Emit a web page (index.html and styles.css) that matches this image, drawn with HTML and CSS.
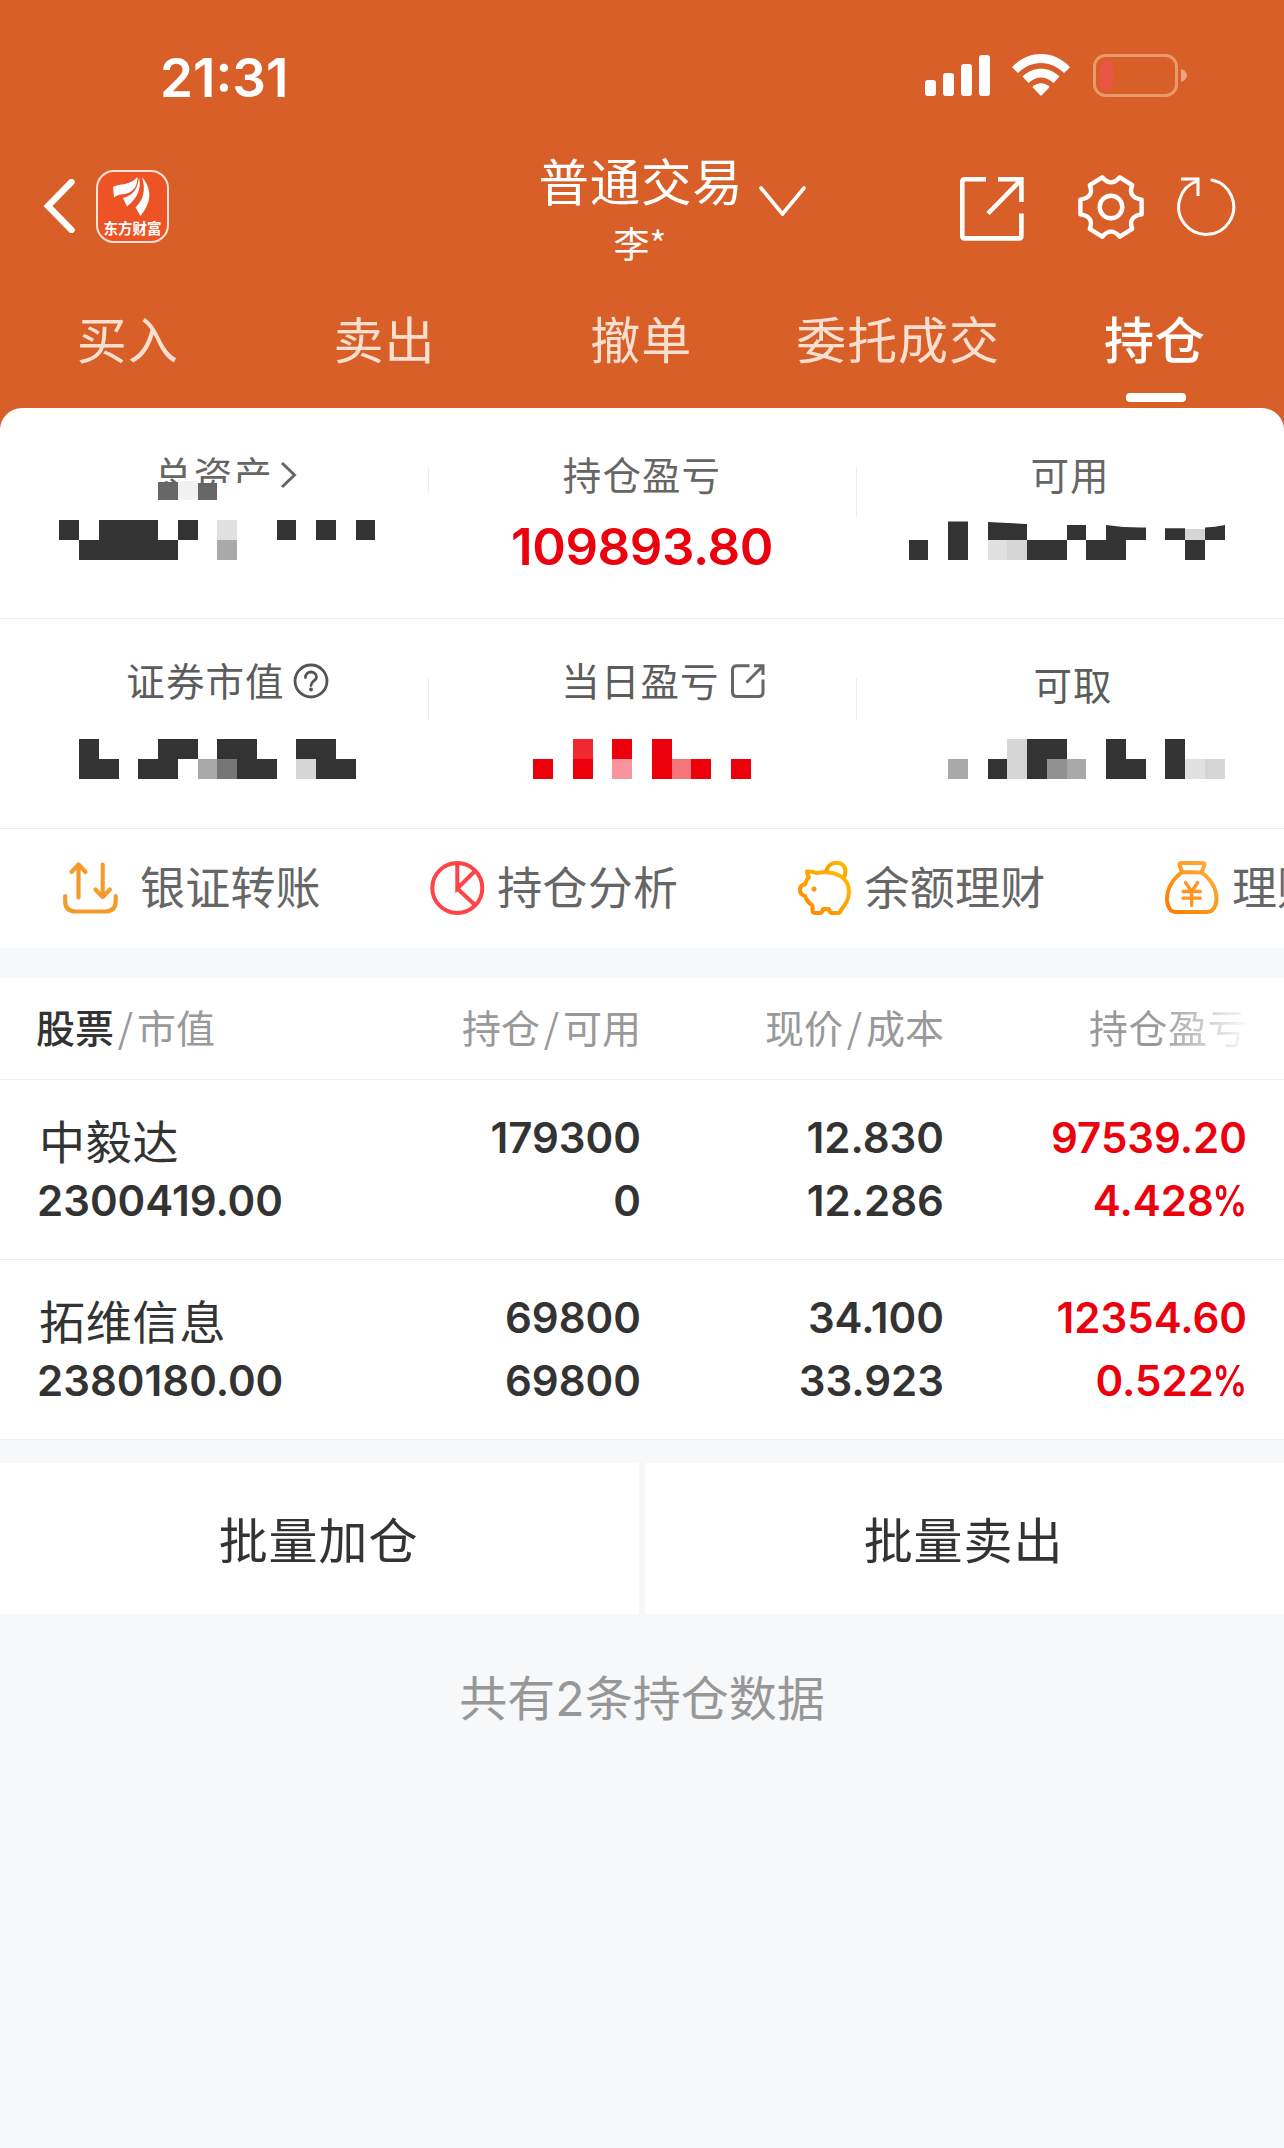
FILE: index.html
```html
<!DOCTYPE html>
<html lang="zh-CN">
<head>
<meta charset="utf-8">
<title>普通交易 - 持仓</title>
<link rel="stylesheet" href="styles.css">
</head>
<body>
<div class="top">
  <div class="status">
    <span class="time">21:31</span>
    <div class="status-icons">
      <svg width="65" height="43" viewBox="0 0 65 43" fill="#fff"><rect x="0" y="26" width="11" height="16" rx="3"/><rect x="18" y="19" width="11" height="23" rx="3"/><rect x="36" y="10" width="11" height="32" rx="3"/><rect x="54" y="1" width="11" height="41" rx="3"/></svg>
      <svg width="58" height="43" viewBox="0 0 58 43" fill="#fff"><path d="M0 13.200C16-4.400 42-4.400 58 13.200L52 19C39 5.500 19 5.500 6 19z"/><path d="M10.500 22.500C21 12 37 12 47.500 22.500L41.500 29C34 21.500 24 21.500 16.500 29z"/><path d="M20.300 33C25.500 28 32.500 28 37.700 33L29 42z"/></svg>
      <svg class="battery" width="95" height="43" viewBox="0 0 95 43"><rect x="1.500" y="1.500" width="82" height="40" rx="11" fill="none" stroke="#e99a6c" stroke-width="3"/><rect x="7" y="7" width="13" height="29" rx="5" fill="#ea5545"/><path d="M88 15c8 3 8 10 0 13z" fill="#eba67f"/></svg>
    </div>
  </div>
  <div class="nav">
    <div class="nav-left">
      <svg width="32" height="54" viewBox="0 0 32 54"><path d="M28.500 3L5 27l23.500 24" fill="none" stroke="#fff" stroke-width="6.400" stroke-linejoin="miter" stroke-linecap="round"/></svg>
      <div class="logo">
        <svg width="69" height="48" viewBox="2 2 69 48" fill="#fff"><path d="M17 17C24 13 34 16 41.500 7c0 8-3 13-9 16-5 2-10 .5-14.500 4.500z"/><path d="M43 7c2.500 11-1 21-12 29.500L27 28c11-3 15-10 16-21z"/><path d="M46 7c11 13 9 26-1.500 39L39.500 37.500c8-8 10.500-17 6.500-30.500z"/></svg>
        <span class="logo-name">东方财富</span>
      </div>
    </div>
    <div class="nav-title">
      <div><div class="title">普通交易</div><div class="user">李*</div></div>
      <svg class="chevron" width="47" height="32" viewBox="0 0 47 32"><path d="M2 2l21.500 26L45 2" fill="none" stroke="#fff" stroke-width="3.600" stroke-linejoin="round" stroke-linecap="round"/></svg>
    </div>
    <div class="nav-right">
      <svg class="share" width="64" height="64" viewBox="0 0 64 64" fill="none" stroke="#fff" stroke-width="4.600"><path d="M26 2.300H5Q2.300 2.300 2.300 5v53.700q0 2.700 2.700 2.700h53.700q2.700 0 2.700-2.700V36.500M38 2.300h23.400V25M61 3L28 36.500"/></svg>
      <svg class="gear" width="68" height="66" viewBox="-34 -33 68 66" fill="none" stroke="#fff" stroke-width="4.400" stroke-linejoin="round"><path d="M30.600 7.400Q16.500 9.500 21.200 21.900L8.800 29.700Q0 19.500-8.800 29.700L-21.200 21.900Q-16.500 9.500-30.600 7.400V-7.400Q-16.500-9.500-21.200-21.900L-8.800-29.700Q0-19.500 8.800-29.700L21.200-21.900Q16.500-9.500 30.600-7.400z"/><circle r="11.300"/></svg>
      <svg width="60" height="60" viewBox="0 0 60 60" fill="none" stroke="#fff" stroke-width="3" stroke-linecap="round"><path d="M36 4A27.500 27.500 0 1 1 21.500 4.800"/><path d="M5 3h17v17" stroke-linecap="butt"/></svg>
    </div>
  </div>
  <div class="tabs">
    <span class="tab">买入</span><span class="tab">卖出</span><span class="tab">撤单</span><span class="tab">委托成交</span><span class="tab active">持仓</span>
  </div>
  <div class="summary">
    <div class="sum-row">
      <div class="cell">
        <div class="label total"><span>总资产</span><svg width="17" height="28" viewBox="0 0 17 28"><path d="M2 2l12.500 12L2 26" fill="none" stroke="#666" stroke-width="3"/></svg></div>
        <svg class="mosaic raised" width="428" height="79" viewBox="0 481 428 79" shape-rendering="crispEdges"><path fill="#fff" d="M140 483h136v5h20v12H140z"/><path fill="#666" d="M158 482h20v18h-20zM198 483h19v17h-19z"/><path fill="#f1f1f1" d="M178 481h20v19h-20z"/><path fill="#333" d="M59 520h20v20H59zM99 520h59v20H99zM178 520h20v20h-20zM277 520h19v20h-19zM316 520h20v20h-20zM356 520h19v20h-19zM79 540h99v20H79z"/><path fill="#e1e1e1" d="M217 520h20v20h-20z"/><path fill="#a9a9a9" d="M217 540h20v20h-20z"/></svg>
      </div>
      <div class="cell divided short"><div class="label">持仓盈亏</div><div class="profit">109893.80</div></div>
      <div class="cell divided">
        <div class="label avail">可用</div>
        <svg class="mosaic" width="428" height="40" viewBox="856 520 428 40"><g shape-rendering="crispEdges"><path fill="#333" d="M909 540h19v20h-19zM948 540h20v20h-20zM1027 540h40v20h-40zM1086 540h40v20h-40zM1185 540h20v20h-20z"/><path fill="#e1e1e1" d="M988 540h19v20h-19z"/><path fill="#d6d6d6" d="M1007 540h20v20h-20zM1185 528.500h20V540h-20z"/></g><path fill="#333" d="M948 521.500h20V541h-20zM988 522l39 2v16h-39zM1067 525h19v15h-19zM1106 525q20 3 40 2.500V540h-20v1h-20zM1165 528.300h20V540h-20zM1205 527.500q10-.5 20-2.500v15h-20z"/></svg>
      </div>
    </div>
    <div class="sum-row second">
      <div class="cell">
        <div class="label worth"><span>证券市值</span><svg width="36" height="36" viewBox="0 0 36 36" fill="none" stroke="#555" stroke-width="2.800"><circle cx="18" cy="18" r="16"/><path d="M12.500 14.500c0-7.500 11-7 11-.5 0 4-5.500 4-5.500 8.500" stroke-linecap="round"/><circle cx="18" cy="26.500" r="1" stroke-width="2"/></svg></div>
        <svg class="mosaic" width="428" height="40" viewBox="0 739 428 40" shape-rendering="crispEdges"><path fill="#333" d="M79 739h20v20h20v20H79zM138 759h20v-20h40v20h-20v20h-40zM217 739h40v20h20v20h-40v-20h-20zM296 739h40v20h20v20h-40v-20h-20z"/><path fill="#a9a9a9" d="M198 759h19v20h-19z"/><path fill="#767676" d="M217 759h20v20h-20z"/><path fill="#d6d6d6" d="M296 759h20v20h-20z"/></svg>
      </div>
      <div class="cell divided">
        <div class="label today"><span>当日盈亏</span><svg width="34" height="34" viewBox="0 0 34 34" fill="none" stroke="#666" stroke-width="3"><path d="M18.500 1.700H6Q1.500 1.700 1.500 6v22q0 4.500 4.500 4.500h21.500q4.500 0 4.500-4.500V15.500M23 1.700h9V11M32 2L15.500 18.500"/></svg></div>
        <svg class="mosaic" width="428" height="40" viewBox="428 739 428 40" shape-rendering="crispEdges"><path fill="#ec000c" d="M533 759h20v20h-20zM573 759h20v20h-20zM612 739h20v20h-20zM652 739h20v40h-20zM691 759h20v20h-20zM731 759h20v20h-20z"/><path fill="#f02931" d="M573 739h20v20h-20z"/><path fill="#f9949d" d="M612 759h20v20h-20z"/><path fill="#f5757b" d="M672 759h19v20h-19z"/></svg>
      </div>
      <div class="cell divided">
        <div class="label draw">可取</div>
        <svg class="mosaic" width="428" height="40" viewBox="856 739 428 40" shape-rendering="crispEdges"><path fill="#333" d="M988 759h19v20h-19zM1027 739h40v20h-20v20h-20zM1106 739h20v20h20v20h-40zM1165 739h20v40h-20z"/><path fill="#a9a9a9" d="M948 759h20v20h-20zM1067 759h19v20h-19z"/><path fill="#d6d6d6" d="M1007 739h20v40h-20zM1205 759h20v20h-20z"/><path fill="#919191" d="M1047 759h20v20h-20z"/><path fill="#e1e1e1" d="M1185 759h20v20h-20z"/></svg>
      </div>
    </div>
    <div class="quick">
      <div class="quick-item first"><svg width="55" height="54" viewBox="0 -1 55 54" fill="none" stroke="#f39b2c" stroke-width="4.200" stroke-linecap="round" stroke-linejoin="round"><path d="M15.500 35.500V3M8.500 10l7-7.500 7 7.500M39.700 2.500v32M32.500 27.500l7.200 7.500 7.200-7.500M2.200 34v5q0 10.500 10.500 10.500h29.500q10.500 0 10.500-10.500v-5"/></svg><span>银证转账</span></div>
      <div class="quick-item"><svg width="55" height="54" viewBox="0 0 55 54" fill="none" stroke="#ff4347" stroke-width="4"><circle cx="27.300" cy="27" r="25"/><path d="M27.300 2v25.500L45 10M27.300 27.500L45 44"/></svg><span>持仓分析</span></div>
      <div class="quick-item"><svg width="55" height="54" viewBox="0 0 55 54" fill="none" stroke="url(#pig)" stroke-width="4" stroke-linejoin="round"><defs><linearGradient id="pig" x1="0" y1="1" x2="1" y2="0"><stop offset="0" stop-color="#ff8500"/><stop offset="1" stop-color="#ffbf00"/></linearGradient></defs><path d="M28 11.500C30-1.500 47-1 47.500 10q0 4-1.500 6.500"/><path d="M18 12q-4-2-9-1.500 0 3 2 5.500-3 3-4 7.500-5 0-5 5.500 0 4.500 5 6 2 6 7.500 9.500V49q0 3 3 3h4q3 0 3.500-4h6q.5 4 3.500 4h5.500q2 0 3-3c4-5 8-10 8-18.500C51 17 38 8.500 18 12z"/><circle cx="16" cy="28" r="2.500" fill="#ff9900" stroke="none"/></svg><span>余额理财</span></div>
      <div class="quick-item"><svg width="55" height="54" viewBox="0 0 55 54" fill="none" stroke="url(#bag)" stroke-width="4" stroke-linecap="round" stroke-linejoin="round"><defs><linearGradient id="bag" x1="0" y1="1" x2="1" y2="0"><stop offset="0" stop-color="#ff7c00"/><stop offset="1" stop-color="#ffb13d"/></linearGradient></defs><path d="M17 11L14.500 4q0-2 2-2h21q2 0 2 2l-3 7.500zC8 18 2 27 2 38q0 7 4 11.500 2 1.500 5 1.500h31q3 0 5-1.500Q51.500 45 51.500 38c0-11-6-20-15-26.500"/><path d="M20.500 21.500l6.100 9 6.100-9M26.600 31v13.500M18 30.500h17.300M18 37.200h17.300" stroke="#ff951f" stroke-width="3.300"/></svg><span>理财</span></div>
    </div>
  </div>
</div>
<div class="holdings">
  <div class="grid head"><span><b>股票</b><i>/</i>市值</span><span>持仓<i>/</i>可用</span><span>现价<i>/</i>成本</span><span class="fade">持仓盈亏</span></div>
  <div class="grid stock">
    <div><span class="name">中毅达</span><span>2300419.00</span></div>
    <div><span>179300</span><span>0</span></div>
    <div><span>12.830</span><span>12.286</span></div>
    <div class="up"><span>97539.20</span><span>4.428<em>%</em></span></div>
  </div>
  <div class="grid stock">
    <div><span class="name">拓维信息</span><span>2380180.00</span></div>
    <div><span>69800</span><span>69800</span></div>
    <div><span>34.100</span><span>33.923</span></div>
    <div class="up"><span>12354.60</span><span>0.522<em>%</em></span></div>
  </div>
</div>
<div class="actions"><div class="action">批量加仓</div><div class="action">批量卖出</div></div>
<div class="footer">共有<span class="count">2</span>条持仓数据</div>
</body>
</html>
```
FILE: styles.css
```css
* { box-sizing: border-box; }
body { margin: 0; width: 1284px; min-height: 2148px; overflow-x: hidden; background: #f7f8fa; color: #333; font-family: "Noto Sans CJK SC", sans-serif; }
svg { display: block; flex: none; }
i { font-style: normal; }

.top { background: #d86028; }
.status { height: 150px; padding: 54px 96px 0 160px; display: flex; justify-content: space-between; align-items: flex-start; color: #fff; }
.time { font: 600 53px/48px Inter, sans-serif; letter-spacing: 0; }
.status-icons { display: flex; }
.status-icons svg + svg { margin-left: 22px; }
.status-icons svg.battery { margin-left: 23px; }

.nav { height: 130px; display: grid; grid-template-columns: 450px 1fr 450px; color: #fff; }
.nav-left { display: flex; padding: 20px 0 0 43px; }
.nav-left > svg { margin-top: 9px; }
.logo { margin-left: 21px; width: 73px; height: 73px; border: 2px solid #fbe3d8; border-radius: 18px; background: #ee5326; display: flex; flex-direction: column; align-items: center; }
.logo-name { font-size: 14.500px; line-height: 15px; font-weight: 700; white-space: nowrap; }
.nav-title { display: flex; justify-content: center; padding-left: 59px; text-align: center; }
.title { width: 208px; margin-top: -1px; font-size: 50.500px; line-height: 60px; letter-spacing: 0.800px; white-space: nowrap; }
.user { font-size: 36px; line-height: 50px; margin-top: 8px; padding-right: 2px; }
.chevron { margin: 36px 0 0 14px; }
.nav-right { display: flex; align-items: flex-start; padding: 27px 48px 0 126px; }
.gear { margin: -3px 31px 0 53px; }
.gear + svg { margin-top: -1px; }

.tabs { display: grid; grid-template-columns: repeat(5, 1fr); height: 128px; }
.tab { display: flex; flex-direction: column; align-items: center; padding-top: 26px; font-size: 50px; line-height: 63px; letter-spacing: 0.900px; color: #f8dfd0; white-space: nowrap; text-indent: -1.500px; }
.tab.active { color: #fff; font-weight: 500; }
.tab.active::after { content: ""; width: 60px; height: 9px; border-radius: 4px; background: #fff; margin-top: 24px; }

.summary { background: #fff; border-radius: 22px 22px 0 0; overflow: hidden; }
.sum-row { display: grid; grid-template-columns: repeat(3, 1fr); height: 211px; border-bottom: 1px solid #ececec; }
.sum-row.second { height: 210px; }
.cell { display: flex; flex-direction: column; align-items: center; padding-top: 41px; background: linear-gradient(#ececec, #ececec) no-repeat 0 60px / 0 0; }
.divided { background-size: 1px 48px; }
.divided.short { background-size: 1px 25px; }
.second .divided { background-position: 0 59px; background-size: 1px 42px; }
.label { display: flex; align-items: center; height: 48px; font-size: 38.500px; line-height: 48px; letter-spacing: 1.100px; color: #666; white-space: nowrap; }
.total { padding-left: 23px; }
.total svg { margin: 4px 0 0 7px; }
.mosaic { margin-top: 23px; }
.mosaic.raised { position: relative; margin-top: -16px; }
.profit { font: 600 51px/60px Inter, sans-serif; letter-spacing: -0.400px; color: #ed000d; margin-top: 20px; }
.second .cell { padding-top: 36px; }
.second .label { color: #5c5c5c; }
.second .mosaic { margin-top: 36px; }
.worth { padding-left: 27px; }
.worth svg { margin: 4px 0 0 8px; }
.today { padding-left: 42px; }
.today svg { margin: 4px 0 0 11px; }
.second .draw { position: relative; top: 4px; padding-left: 6px; }

.quick { display: flex; height: 119px; padding: 3px 0 0 63px; }
.quick-item { display: flex; align-items: center; flex: none; width: 367.300px; height: 111px; font-size: 45px; letter-spacing: 0.200px; color: #666; white-space: nowrap; }
.quick-item svg { margin-right: 12px; }
.quick-item.first svg { margin-right: 22px; }
.quick-item span { line-height: 60px; margin-top: -3px; }

.holdings { margin-top: 30px; background: #fff; }
.grid { display: grid; grid-template-columns: 302px 302px 303px 303px; padding-left: 37px; padding-right: 37px; border-bottom: 1px solid #ececec; }
.grid > * { text-align: right; white-space: nowrap; }
.grid > :first-child { text-align: left; }
.head { height: 102px; font-size: 39px; line-height: 97px; color: #999; }
.head > :first-child { margin-left: -1px; }
.head b { font-weight: 500; color: #333; }
.head i { display: inline-block; width: 23px; text-align: center; }
.fade { letter-spacing: 0.500px; background: linear-gradient(90deg, #999 70%, rgba(153,153,153,.1) 98%); -webkit-background-clip: text; background-clip: text; color: transparent; }
.stock { height: 180px; padding-top: 26px; font: 570 42px/63px Inter, sans-serif; }
.stock span { display: block; }
.stock em { display: inline-block; font-style: normal; transform: scaleX(0.82); transform-origin: right; margin-left: -9px; }
.stock .name { font: 400 46px/67px "Noto Sans CJK SC", sans-serif; padding-left: 2px; letter-spacing: 0.800px; height: 63px; }
.up { color: #ed000d; }

.actions { margin-top: 23px; display: grid; grid-template-columns: 1fr 1fr; gap: 6px; height: 151px; }
.action { background: #fff; text-align: center; font-size: 49px; line-height: 150px; letter-spacing: 0.900px; padding-right: 2px; }
.footer { margin-top: 49px; text-align: center; font-size: 48px; line-height: 64px; color: #979797; }
.count { font-family: Inter, sans-serif; font-weight: 400; }
```
